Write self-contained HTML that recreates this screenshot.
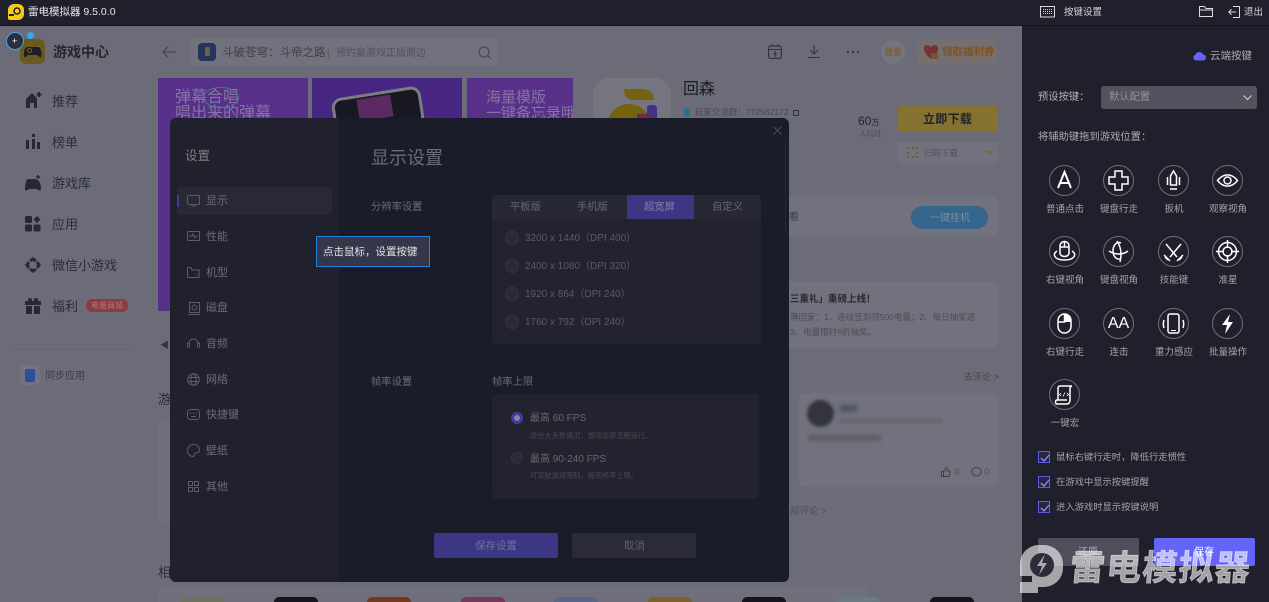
<!DOCTYPE html>
<html lang="zh"><head><meta charset="utf-8"><title>雷电模拟器</title>
<style>
*{box-sizing:border-box}
html,body{margin:0;padding:0;width:1269px;height:602px;overflow:hidden;background:#6b6c78;font-family:"Liberation Sans","Noto Sans CJK SC",sans-serif}
.a,.t{position:absolute}
.t{white-space:nowrap;line-height:1.2}
svg{position:absolute;overflow:visible}
.nav{font-size:13px;color:#2b2c38}
.m{font-size:11px;color:#6b6c77}
.ic{fill:none;stroke:#5c5d68;stroke-width:1}
.r{position:absolute;width:14px;height:14px;border-radius:50%;background:#2a2b37;border:1px solid #343541;left:505px}
.res{font-size:10px;color:#5a5b66;left:525px}
.c{position:absolute;width:31px;height:31px;border-radius:50%;border:1px solid #6f707b}
.c svg{left:0;top:0}
.w{fill:none;stroke:#fff;stroke-width:1.5}
.lb{position:absolute;width:70px;text-align:center;font-size:9.5px;color:#a3a4ad;line-height:12px}
.cb{position:absolute;left:1038px;width:12px;height:12px;border:1px solid #5c5ce0;background:#262745}
.cb svg{left:1px;top:1px}
.cl{font-size:9.3px;color:#a3a4ad;left:1056px}
</style></head>
<body>
<!-- background page -->
<div class="a" style="left:158px;top:78px;width:150px;height:233px;background:#573089"></div>
<div class="a" style="left:158px;top:298px;width:150px;height:13px;background:#513485"></div>
<div class="t" style="left:175px;top:88px;font-size:16px;color:#8575a0">弹幕合唱</div>
<div class="t" style="left:175px;top:104px;font-size:16px;color:#8575a0">唱出来的弹幕</div>
<div class="a" style="left:203px;top:87px;width:36px;height:21px;border:1.5px solid #3f8088;border-radius:50%"></div>
<div class="a" style="left:312px;top:78px;width:150px;height:42px;background:#472583"></div>
<div class="a" style="left:333px;top:92px;width:90px;height:40px;background:#181822;border:3px solid #7c7c85;border-radius:10px;transform:rotate(-9deg)"></div>
<div class="a" style="left:358px;top:97px;width:34px;height:22px;background:#5c2a62;transform:rotate(-9deg)"></div>
<div class="a" style="left:467px;top:78px;width:106px;height:42px;background:#573089"></div>
<div class="t" style="left:486px;top:89px;font-size:15px;color:#8575a0">海量模版</div>
<div class="t" style="left:486px;top:105px;font-size:15px;color:#8575a0;width:87px;overflow:hidden">一键备忘录哦</div>

<!-- left nav -->
<div class="a" style="left:20px;top:39px;width:25px;height:25px;border-radius:6px;background:#6a5a1e"></div>
<svg style="left:20px;top:39px" width="25" height="25"><path d="M7 8h11c3 0 4 6 3.500 9-.5 2-2.500 1-4-1H8c-1.500 2-3.500 3-4 1-.5-3 .5-9 3-9z" fill="#1e1e28"/><circle cx="9.500" cy="11.500" r="2" fill="none" stroke="#7b6620"/></svg>
<div class="t" style="left:53px;top:44px;font-size:14px;color:#24252f;font-weight:bold">游戏中心</div>
<div class="a" style="left:6px;top:32px;width:18px;height:18px;border-radius:50%;background:#2d2e3c;border:1px solid #37a7ee"></div>
<div class="t" style="left:12px;top:36px;font-size:9px;color:#fff">+</div>
<div class="a" style="left:27px;top:32px;width:7px;height:7px;border-radius:50%;background:#37a7ee"></div>

<svg style="left:26px;top:92px" width="16" height="16"><path d="M0 7 6 1l5 5v10H8v-5H4v5H0z" fill="#272833"/><path d="M13 0v5M10.500 2.500h5" stroke="#272833" stroke-width="2"/></svg>
<div class="t nav" style="left:52px;top:94px">推荐</div>
<svg style="left:26px;top:134px" width="15" height="15"><path d="M0 6h3v9H0zM6 0h3v3H6zM6 5h3v10H6zM11 8h3v7h-3z" fill="#272833"/></svg>
<div class="t nav" style="left:52px;top:135px">榜单</div>
<svg style="left:24px;top:175px" width="18" height="16"><path d="M4 4h8l1 1c3 0 4 6 4 9 0 2-2 2-4 0H5c-2 2-4 2-4 0 0-4 1-10 3-10z" fill="#272833"/><path d="M14 0v4M12 2h4" stroke="#272833" stroke-width="1.500"/></svg>
<div class="t nav" style="left:52px;top:176px">游戏库</div>
<svg style="left:25px;top:216px" width="16" height="16"><rect width="7" height="7" rx="1.500" fill="#272833"/><rect y="8.500" width="7" height="7" rx="1.500" fill="#272833"/><rect x="8.500" y="8.500" width="7" height="7" rx="1.500" fill="#272833"/><path d="M12 0l3.500 3.500L12 7 8.500 3.500z" fill="#272833"/></svg>
<div class="t nav" style="left:52px;top:217px">应用</div>
<svg style="left:25px;top:257px" width="16" height="16"><path d="M8 0l4 3-2 2-2-1-2 1-2-2zM16 8l-3 4-2-2 1-2-1-2 2-2zM8 16l-4-3 2-2 2 1 2-1 2 2zM0 8l3-4 2 2-1 2 1 2-2 2z" fill="#272833"/></svg>
<div class="t nav" style="left:52px;top:258px">微信小游戏</div>
<svg style="left:25px;top:298px" width="16" height="16"><path d="M0 3h16v4H0zM1 8h6v8H1zM9 8h6v8H9z" fill="#272833"/><circle cx="5" cy="2" r="2" fill="#272833"/><circle cx="11" cy="2" r="2" fill="#272833"/></svg>
<div class="t nav" style="left:52px;top:299px">福利</div>
<div class="a" style="left:86px;top:299px;width:42px;height:13px;border-radius:6px;background:#8b3c40"></div>
<div class="t" style="left:91px;top:301px;font-size:8px;color:#b0757a">电量商城</div>
<div class="a" style="left:14px;top:349px;width:120px;height:1px;background:#646571"></div>
<div class="a" style="left:20px;top:365px;width:20px;height:20px;border-radius:4px;background:#72737f"></div>
<div class="a" style="left:25px;top:369px;width:10px;height:13px;border-radius:2px;background:#2a4f9c"></div>
<div class="t" style="left:45px;top:371px;font-size:10px;color:#3c3d49">同步应用</div>
<div class="t" style="left:160px;top:340px;font-size:9px;color:#33343f">◀</div>
<div class="t" style="left:158px;top:392px;font-size:13px;color:#2b2c38">游</div>
<div class="a" style="left:158px;top:421px;width:20px;height:102px;background:#6f707c;border-radius:4px"></div>
<div class="t" style="left:158px;top:565px;font-size:13px;color:#2b2c38">相</div>
<div class="a" style="left:158px;top:587px;width:710px;height:15px;background:#6f707c;border-radius:4px 4px 0 0"></div>
<div class="a" style="left:180px;top:597px;width:44px;height:5px;background:#6f7060;border-radius:14px 14px 0 0"></div>
<div class="a" style="left:274px;top:597px;width:44px;height:5px;background:#15151d;border-radius:14px 14px 0 0"></div>
<div class="a" style="left:367px;top:597px;width:44px;height:5px;background:#73391f;border-radius:14px 14px 0 0"></div>
<div class="a" style="left:461px;top:597px;width:44px;height:5px;background:#73385a;border-radius:14px 14px 0 0"></div>
<div class="a" style="left:554px;top:597px;width:44px;height:5px;background:#566885;border-radius:14px 14px 0 0"></div>
<div class="a" style="left:648px;top:597px;width:44px;height:5px;background:#7c602e;border-radius:14px 14px 0 0"></div>
<div class="a" style="left:742px;top:597px;width:44px;height:5px;background:#15151d;border-radius:14px 14px 0 0"></div>
<div class="a" style="left:836px;top:597px;width:44px;height:5px;background:#6a7a85;border-radius:14px 14px 0 0"></div>
<div class="a" style="left:930px;top:597px;width:44px;height:5px;background:#15151d;border-radius:14px 14px 0 0"></div>

<!-- search bar -->
<svg style="left:162px;top:46px" width="14" height="12"><path d="M14 6H1M6 1 1 6l5 5" fill="none" stroke="#40414c" stroke-width="1.100"/></svg>
<div class="a" style="left:191px;top:38px;width:307px;height:28px;background:#71727e;border-radius:6px"></div>
<div class="a" style="left:198px;top:43px;width:18px;height:18px;border-radius:4px;background:#25345a"></div>
<div class="a" style="left:205px;top:47px;width:5px;height:9px;background:#6e604f;border-radius:2px"></div>
<div class="t" style="left:222px;top:47px;font-size:11.500px;color:#3e3f48">斗破苍穹：斗帝之路</div>
<div class="t" style="left:327px;top:48px;font-size:9px;color:#4a4b55">|</div>
<div class="t" style="left:336px;top:48px;font-size:10px;color:#50515c">预约赢游戏正版周边</div>
<svg style="left:478px;top:46px" width="14" height="14"><circle cx="6" cy="6" r="5" fill="none" stroke="#444550" stroke-width="1.100"/><path d="M10 10l3 3" stroke="#444550" stroke-width="1.100"/></svg>

<!-- top-right icons -->
<svg style="left:768px;top:44px" width="14" height="15"><rect x=".6" y="2" width="12.800" height="12.400" rx="2" fill="none" stroke="#32333e" stroke-width="1.200"/><path d="M.6 5.500h12.800M4 0v3M10 0v3M8 7 6 10h2l-1 3" fill="none" stroke="#32333e" stroke-width="1.100"/></svg>
<svg style="left:808px;top:45px" width="12" height="13"><path d="M6 0v9M2 5l4 4 4-4M0 12.500h12" fill="none" stroke="#32333e" stroke-width="1.100"/></svg>
<div class="a" style="left:847px;top:51px;width:12px;height:2px;background:repeating-linear-gradient(90deg,#32333e 0 2px,transparent 2px 5px)"></div>
<div class="a" style="left:881px;top:40px;width:24px;height:24px;border-radius:50%;background:#74757f"></div>
<div class="t" style="left:884px;top:47px;font-size:9px;color:#7f6220;font-weight:bold">登录</div>
<div class="a" style="left:917px;top:40px;width:80px;height:25px;border-radius:6px;background:#75706f"></div>
<svg style="left:923px;top:44px" width="16" height="17"><path d="M1 3c2-3 5-2 7 0 2-2 5-3 7 0 1 4-3 9-7 12C4 12 0 7 1 3z" fill="#743235"/><rect x="8" y="9" width="7" height="6" rx="1" fill="#765a26"/></svg>
<div class="t" style="left:942px;top:46px;font-size:10.500px;color:#7e5224;font-weight:bold">领取福利券</div>

<!-- game info -->
<div class="a" style="left:593px;top:78px;width:78px;height:60px;background:#74757f;border-radius:16px 16px 0 0"></div>
<div class="a" style="left:624px;top:89px;width:30px;height:11px;background:#74620f;border-radius:1px 14px 0 12px"></div>
<div class="a" style="left:607px;top:104px;width:44px;height:30px;background:#74620f;border-radius:22px 22px 0 0"></div>
<div class="a" style="left:647px;top:105px;width:10px;height:15px;background:#443383;border-radius:3px"></div>
<div class="a" style="left:637px;top:114px;width:12px;height:6px;background:#702b4a"></div>
<div class="t" style="left:683px;top:80px;font-size:16px;color:#191a22">回森</div>
<div class="a" style="left:684px;top:108px;width:6px;height:9px;border-radius:3px;background:#2a7090"></div>
<div class="t" style="left:695px;top:107px;font-size:8.500px;color:#474852">玩家交流群：772562172</div>
<div class="a" style="left:793px;top:110px;width:6px;height:6px;border:1px solid #30313c"></div>
<div class="t" style="left:858px;top:114px;font-size:12px;color:#22232d">60<span style="font-size:8px">万</span></div>
<div class="t" style="left:859px;top:129px;font-size:7.500px;color:#4a4b56">人玩过</div>
<div class="a" style="left:898px;top:106px;width:100px;height:26px;background:#857130;border-radius:2px"></div>
<div class="t" style="left:923px;top:112px;font-size:12px;color:#22232d;font-weight:bold;letter-spacing:.3px">立即下载</div>
<div class="a" style="left:898px;top:142px;width:100px;height:21px;background:#71727e;border-radius:2px"></div>
<div class="a" style="left:907px;top:147px;width:11px;height:11px;border:2px dotted #6f6030"></div>
<div class="t" style="left:924px;top:148px;font-size:8.500px;color:#51525c">扫码下载</div>
<div class="a" style="left:986px;top:151px;border:4px solid transparent;border-top:4px solid #7d6a2c;border-bottom:0"></div>

<div class="a" style="left:789px;top:197px;width:209px;height:40px;background:#71727e;border-radius:0 5px 5px 0"></div>
<div class="t" style="left:789px;top:212px;font-size:10px;color:#3d3e48">看</div>
<div class="a" style="left:911px;top:206px;width:77px;height:23px;border-radius:12px;background:#35658a"></div>
<div class="t" style="left:930px;top:213px;font-size:10px;color:#7a8da0">一键挂机</div>

<div class="a" style="left:789px;top:282px;width:209px;height:66px;background:#71727e;border-radius:0 6px 6px 0"></div>
<div class="t" style="left:790px;top:294px;font-size:9.500px;color:#26272f;font-weight:bold">三重礼」重磅上线！</div>
<div class="t" style="left:790px;top:312px;font-size:8.500px;color:#4b4c56">薄回家：1、连续签到领500电量；2、每日抽奖送</div>
<div class="t" style="left:790px;top:327px;font-size:8.500px;color:#4b4c56">3、电量限时6折抽奖。</div>
<div class="t" style="left:964px;top:372px;font-size:9px;color:#45464f">去评论 &gt;</div>
<div class="a" style="left:799px;top:393px;width:199px;height:94px;background:#71727e;border-radius:6px"></div>
<div class="a" style="left:807px;top:400px;width:27px;height:27px;border-radius:50%;background:#33343e;filter:blur(1.500px)"></div>
<div class="a" style="left:840px;top:405px;width:17px;height:7px;background:#52535d;filter:blur(2px)"></div>
<div class="a" style="left:840px;top:419px;width:102px;height:4px;background:#62636d;filter:blur(1.500px)"></div>
<div class="a" style="left:808px;top:435px;width:73px;height:6px;background:#5c5d67;filter:blur(2px)"></div>
<svg style="left:941px;top:467px" width="10" height="10"><path d="M.5 4.500h2v5h-2zM2.500 5 5 .5c1.500 0 1.500 2 1 3.500h3v1.500L8 9.500H2.500" fill="none" stroke="#3d3e48" stroke-width=".9"/></svg>
<div class="t" style="left:954px;top:467px;font-size:9.500px;color:#4b4c56">0</div>
<svg style="left:971px;top:467px" width="11" height="10"><ellipse cx="5.500" cy="4.700" rx="4.800" ry="4.200" fill="none" stroke="#3d3e48" stroke-width=".9"/></svg>
<div class="t" style="left:984px;top:467px;font-size:9.500px;color:#4b4c56">0</div>
<div class="t" style="left:790px;top:506px;font-size:9.500px;color:#50515b">部评论 &gt;</div>

<!-- modal -->
<div class="a" style="left:170px;top:118px;width:619px;height:464px;background:#1b1c29;border-radius:6px;overflow:hidden">
<div class="a" style="left:0;top:0;width:169px;height:464px;background:#20212d"></div>
<div class="a" style="left:615px;top:22px;width:1px;height:90px;background:#272834"></div>
</div>
<div class="t" style="left:185px;top:149px;font-size:12.500px;color:#7d7e87">设置</div>
<div class="a" style="left:177px;top:187px;width:155px;height:28px;border-radius:5px;background:#282935"></div>
<div class="a" style="left:177px;top:195px;width:2px;height:12px;background:#403d8f"></div>

<svg style="left:187px;top:195px" width="14" height="12"><rect class="ic" x=".5" y=".5" width="12" height="9" rx="1.500"/><path class="ic" d="M4 11h5"/></svg>
<div class="t m" style="left:206px;top:195px">显示</div>
<svg style="left:187px;top:231px" width="14" height="12"><rect class="ic" x=".5" y=".5" width="12" height="9" rx="1"/><path class="ic" d="M2 5h3l1-2 1.500 4L9 5h2"/></svg>
<div class="t m" style="left:206px;top:231px">性能</div>
<svg style="left:187px;top:266px" width="14" height="13"><path class="ic" d="M.5 2V11.500h11.500V4H5L4 1.500H1zM9.500 8h.5"/></svg>
<div class="t m" style="left:206px;top:267px">机型</div>
<svg style="left:188px;top:302px" width="13" height="13"><rect class="ic" x="1.500" y=".5" width="10" height="10"/><circle class="ic" cx="6.500" cy="5.500" r="2.500"/><path class="ic" d="M.5 12.500h12"/></svg>
<div class="t m" style="left:206px;top:302px">磁盘</div>
<svg style="left:187px;top:338px" width="14" height="12"><path class="ic" d="M2.500 9V4a4 3 0 0 1 8 0v5M.5 5h2v4h-2zM10.500 5h2v4h-2z"/></svg>
<div class="t m" style="left:206px;top:338px">音频</div>
<svg style="left:187px;top:373px" width="13" height="13"><circle class="ic" cx="6.500" cy="6.500" r="5.800"/><ellipse class="ic" cx="6.500" cy="6.500" rx="2.500" ry="5.800"/><path class="ic" d="M1 4.500h11M1 8.500h11"/></svg>
<div class="t m" style="left:206px;top:374px">网络</div>
<svg style="left:187px;top:409px" width="13" height="12"><rect class="ic" x=".5" y=".5" width="12" height="10" rx="2.500"/><path class="ic" d="M3.500 3.500v1.500M6.500 3.500v1.500M9.500 3.500v1.500M4 7.500h5"/></svg>
<div class="t m" style="left:206px;top:409px">快捷键</div>
<svg style="left:187px;top:444px" width="13" height="13"><path class="ic" d="M6.500.5C3 .5.500 3 .500 6.500S3 12.500 6 12.500c2 0 .5-3 2.500-3.500s4 0 4-3C12.500 3 10 .5 6.500.5z"/></svg>
<div class="t m" style="left:206px;top:445px">壁纸</div>
<svg style="left:188px;top:481px" width="12" height="12"><rect class="ic" x=".5" y=".5" width="4" height="4"/><rect class="ic" x="6.500" y=".5" width="4" height="4"/><rect class="ic" x=".5" y="6.500" width="4" height="4"/><rect class="ic" x="6.500" y="6.500" width="4" height="4"/></svg>
<div class="t m" style="left:206px;top:481px">其他</div>

<svg style="left:773px;top:126px" width="9" height="9"><path d="M.5.500l8 8M8.500.500l-8 8" stroke="#4f505b"/></svg>
<div class="t" style="left:371px;top:148px;font-size:18px;color:#6c6d75">显示设置</div>
<div class="t" style="left:371px;top:202px;font-size:10.300px;color:#6a6b74">分辨率设置</div>

<div class="a" style="left:492px;top:195px;width:269px;height:149px;background:#22232f;border-radius:4px"></div>
<div class="a" style="left:492px;top:195px;width:269px;height:24px;background:#272834;border-radius:4px 4px 0 0"></div>
<div class="a" style="left:627px;top:195px;width:67px;height:24px;background:#3b3784"></div>
<div class="t" style="left:510px;top:202px;font-size:10.300px;color:#666771">平板版</div>
<div class="t" style="left:577px;top:202px;font-size:10.300px;color:#666771">手机版</div>
<div class="t" style="left:644px;top:202px;font-size:10.300px;color:#8381a6">超宽屏</div>
<div class="t" style="left:712px;top:202px;font-size:10.300px;color:#666771">自定义</div>
<div class="r" style="top:231px"></div><div class="t res" style="top:233px">3200 x 1440（DPI 400）</div>
<div class="r" style="top:259px"></div><div class="t res" style="top:261px">2400 x 1080（DPI 320）</div>
<div class="r" style="top:287px"></div><div class="t res" style="top:289px">1920 x 864（DPI 240）</div>
<div class="r" style="top:315px"></div><div class="t res" style="top:317px">1760 x 792（DPI 240）</div>

<div class="t" style="left:371px;top:377px;font-size:10.300px;color:#6a6b74">帧率设置</div>
<div class="t" style="left:492px;top:377px;font-size:10.300px;color:#6a6b74">帧率上限</div>
<div class="a" style="left:492px;top:394px;width:267px;height:105px;background:#22232f;border-radius:4px"></div>
<div class="a" style="left:511px;top:412px;width:12px;height:12px;border-radius:50%;background:#453b9c"></div>
<div class="a" style="left:514px;top:415px;width:6px;height:6px;border-radius:50%;background:#85839f"></div>
<div class="t" style="left:530px;top:413px;font-size:10px;color:#666771">最高 60 FPS</div>
<div class="t" style="left:530px;top:432px;font-size:7.200px;color:#484953">适合大多数情况，游戏能够流畅运行。</div>
<div class="r" style="left:511px;top:452px;width:12px;height:12px"></div>
<div class="t" style="left:530px;top:454px;font-size:10px;color:#666771">最高 90-240 FPS</div>
<div class="t" style="left:530px;top:472px;font-size:7.200px;color:#484953">可突破游戏限制，提高帧率上限。</div>
<div class="a" style="left:434px;top:533px;width:124px;height:25px;background:#3b3784;border-radius:2px"></div>
<div class="t" style="left:475px;top:540px;font-size:10.500px;color:#72719a">保存设置</div>
<div class="a" style="left:572px;top:533px;width:124px;height:25px;background:#2a2b37;border-radius:2px"></div>
<div class="t" style="left:624px;top:540px;font-size:10.500px;color:#60616c">取消</div>

<!-- tooltip -->
<div class="a" style="left:316px;top:236px;width:114px;height:31px;background:#353649;border:1px solid #1c82e0"></div>
<div class="t" style="left:323px;top:246px;font-size:10.500px;color:#e3e3e8">点击鼠标，设置按键</div>

<!-- top bar -->
<div class="a" style="left:0;top:0;width:1269px;height:26px;background:#1f202c;border-bottom:1px solid #15151e"></div>
<svg style="left:8px;top:4px" width="16" height="16"><path d="M6 0h4a6 6 0 0 1 6 6v4a6 6 0 0 1-6 6H2a2 2 0 0 1-2-2V6a6 6 0 0 1 6-6z" fill="#f5cb17"/><circle cx="9" cy="7" r="3" fill="none" stroke="#1f202c" stroke-width="1.500"/><path d="M1 11h5" stroke="#1f202c" stroke-width="2"/></svg>
<div class="t" style="left:28px;top:5px;font-size:10.500px;line-height:14px;color:#e8e8ec">雷电模拟器 9.5.0.0</div>

<!-- right panel -->
<div class="a" style="left:1022px;top:26px;width:247px;height:576px;background:#1f202b"></div>
<svg style="left:1040px;top:6px" width="15" height="12"><rect x=".5" y=".5" width="14" height="10.500" fill="none" stroke="#d8d8dc"/><path d="M3 3.500h9M3 5.500h9M3 7.500h9" stroke="#d8d8dc" stroke-dasharray="1 1"/></svg>
<div class="t" style="left:1064px;top:7px;font-size:9.500px;color:#d5d5da">按键设置</div>
<svg style="left:1199px;top:6px" width="14" height="11"><path d="M.5 10.500V.5h5l1.500 2h6.500v8zM.5 4h13" fill="none" stroke="#dcdce0"/></svg>
<svg style="left:1228px;top:6px" width="12" height="12"><path d="M5 .5h6.500v11H5M8 6H.8M3.500 3.200.8 6l2.700 2.800" fill="none" stroke="#dcdce0"/></svg>
<div class="t" style="left:1244px;top:7px;font-size:9.500px;color:#d5d5da">退出</div>
<svg style="left:1193px;top:51px" width="13" height="10"><path d="M3 9.500a3 3 0 0 1-.5-5.800A4 4 0 0 1 10 3.500a3 3 0 0 1 0 6z" fill="#6a63ee"/></svg>
<div class="t" style="left:1210px;top:50px;font-size:10.500px;color:#a9aab2">云端按键</div>
<div class="t" style="left:1038px;top:92px;font-size:10.300px;color:#b0b1b9">预设按键：</div>
<div class="a" style="left:1101px;top:86px;width:156px;height:23px;background:#52535e;border-radius:3px"></div>
<div class="t" style="left:1109px;top:92px;font-size:10.300px;color:#8f909a">默认配置</div>
<svg style="left:1243px;top:95px" width="9" height="6"><path d="M.5.500l4 4 4-4" fill="none" stroke="#c8c8cf" stroke-width="1.200"/></svg>
<div class="t" style="left:1038px;top:132px;font-size:10.300px;color:#a9aab2">将辅助键拖到游戏位置：</div>

<!-- key icons row 1 -->
<div class="c" style="left:1049px;top:165px"><svg width="29" height="29"><path d="M8 22 14.500 6 21 22M10.500 17h8" fill="none" stroke="#fff" stroke-width="2"/></svg></div>
<div class="c" style="left:1103px;top:165px"><svg width="29" height="29"><path d="M11 5h7v6h6v7h-6v6h-7v-6H5v-7h6z" class="w"/></svg></div>
<div class="c" style="left:1158px;top:165px"><svg width="29" height="29"><path d="M11.500 19v-9l3-5 3 5v9zM8.500 11v8M20.500 11v8M11 23h7" class="w" stroke-width="1"/></svg></div>
<div class="c" style="left:1212px;top:165px"><svg width="29" height="29"><path d="M4.500 14.500c6-7.500 14-7.500 20 0-6 7.500-14 7.500-20 0z" class="w"/><circle cx="14.500" cy="14.500" r="3.500" class="w"/></svg></div>
<div class="t lb" style="left:1030px;top:204px">普通点击</div>
<div class="t lb" style="left:1084px;top:204px">键盘行走</div>
<div class="t lb" style="left:1139px;top:204px">扳机</div>
<div class="t lb" style="left:1193px;top:204px">观察视角</div>
<!-- row 2 -->
<div class="c" style="left:1049px;top:236px"><svg width="29" height="29"><path d="M10 16V9a4.500 4.500 0 0 1 9 0v7a4.500 3.500 0 0 1-9 0zM14.500 5v5M10 10h9" class="w" stroke-width="1.100"/><path d="M7 14c-5 3-3 9 7.500 9S27 17 22 14" class="w" stroke-width="1.200"/></svg></div>
<div class="c" style="left:1103px;top:236px"><svg width="29" height="29"><path d="M17 6c-5-2-8 3-8 8s3 9 8 8" class="w" stroke-width="1.200"/><path d="M13 4c4 6 5 13 3 21M5 14c6 4 14 4 19 0" class="w" stroke-width="1.200"/></svg></div>
<div class="c" style="left:1158px;top:236px"><svg width="29" height="29"><path d="M7 7l11 13M22 7 11 20" class="w" stroke-width="2.600"/><path d="M5 18l6 6M24 18l-6 6M6 20l3 3M23 20l-3 3" class="w" stroke-width="1.600"/></svg></div>
<div class="c" style="left:1212px;top:236px"><svg width="29" height="29"><circle cx="14.500" cy="14.500" r="9" class="w"/><circle cx="14.500" cy="14.500" r="4.500" class="w" stroke-width="1"/><path d="M14.500 3v8M14.500 18v8M3 14.500h8M18 14.500h8" class="w" stroke-width="1.200"/></svg></div>
<div class="t lb" style="left:1030px;top:275px">右键视角</div>
<div class="t lb" style="left:1084px;top:275px">键盘视角</div>
<div class="t lb" style="left:1139px;top:275px">技能键</div>
<div class="t lb" style="left:1193px;top:275px">准星</div>
<!-- row 3 -->
<div class="c" style="left:1049px;top:308px"><svg width="29" height="29"><rect x="8" y="5" width="13" height="19" rx="6.500" class="w"/><path d="M8 13h6.500V5" class="w"/><path d="M14.500 5h0a6.500 6.500 0 0 1 6.500 6.500V13h-6.500z" fill="#fff"/></svg></div>
<div class="c" style="left:1103px;top:308px"><div class="t" style="left:0;width:29px;text-align:center;top:5px;font-size:16px;color:#fff;letter-spacing:0">AA</div></div>
<div class="c" style="left:1158px;top:308px"><svg width="29" height="29"><rect x="9" y="5" width="11" height="19" rx="2" class="w"/><path d="M12 21.500h5" stroke="#fff"/><path d="M5 11c-1 3-1 5 0 8M24 11c1 3 1 5 0 8" class="w" stroke-width="1.200"/></svg></div>
<div class="c" style="left:1212px;top:308px"><svg width="29" height="29"><path d="M17 5 9 16h5l-2 9 8-12h-5z" fill="#fff"/></svg></div>
<div class="t lb" style="left:1030px;top:347px">右键行走</div>
<div class="t lb" style="left:1084px;top:347px">连击</div>
<div class="t lb" style="left:1139px;top:347px">重力感应</div>
<div class="t lb" style="left:1193px;top:347px">批量操作</div>
<!-- row 4 -->
<div class="c" style="left:1049px;top:379px"><svg width="29" height="29"><path d="M8 20V8a2 2 0 0 1 2-2h12M22 6c-2 0-2 2-2 4v10c0 2-1 4-3 4H7c-2 0-2-4 0-4h10" class="w" stroke-width="1.200"/><path d="M11 13l-1.500 1.500L11 16M17 13l1.500 1.500L17 16M15 12.500l-2 4" stroke="#fff" fill="none" stroke-width=".8"/></svg></div>
<div class="t lb" style="left:1030px;top:418px">一键宏</div>

<!-- checkboxes -->
<div class="cb" style="top:451px"><svg width="10" height="10"><path d="M1 5l3 3 5-6" fill="none" stroke="#8f8ff0" stroke-width="1.300"/></svg></div>
<div class="t cl" style="top:452px">鼠标右键行走时，降低行走惯性</div>
<div class="cb" style="top:476px"><svg width="10" height="10"><path d="M1 5l3 3 5-6" fill="none" stroke="#8f8ff0" stroke-width="1.300"/></svg></div>
<div class="t cl" style="top:477px">在游戏中显示按键提醒</div>
<div class="cb" style="top:501px"><svg width="10" height="10"><path d="M1 5l3 3 5-6" fill="none" stroke="#8f8ff0" stroke-width="1.300"/></svg></div>
<div class="t cl" style="top:502px">进入游戏时显示按键说明</div>

<!-- bottom buttons -->
<div class="a" style="left:1038px;top:538px;width:101px;height:28px;background:#4e4f5a;border-radius:2px"></div>
<div class="t" style="left:1078px;top:547px;font-size:10px;color:#a9aab2">还原</div>
<div class="a" style="left:1154px;top:538px;width:101px;height:28px;background:#6464f8;border-radius:2px"></div>
<div class="t" style="left:1194px;top:547px;font-size:10px;color:#fff">保存</div>

<!-- watermark -->
<svg style="left:1020px;top:545px" width="44" height="48"><path d="M18 0h6a19 19 0 0 1 19 19v4a19 19 0 0 1-19 19h-6v6H0V37h12v-6H0V19A19 19 0 0 1 18 0z" fill="#fff" fill-opacity=".6"/><circle cx="22" cy="20" r="12" fill="#1f202b" fill-opacity=".9"/><path d="M25 9l-8 12h5l-3 9 8-12h-5z" fill="#a9a9ae"/></svg>
<div class="t" style="left:1070px;top:549px;font-size:35px;line-height:40px;font-weight:bold;color:rgba(255,255,255,.58);letter-spacing:1.200px;-webkit-text-stroke:.8px rgba(255,255,255,.58);transform:skewX(-5deg)">雷电模拟器</div>
</body></html>
